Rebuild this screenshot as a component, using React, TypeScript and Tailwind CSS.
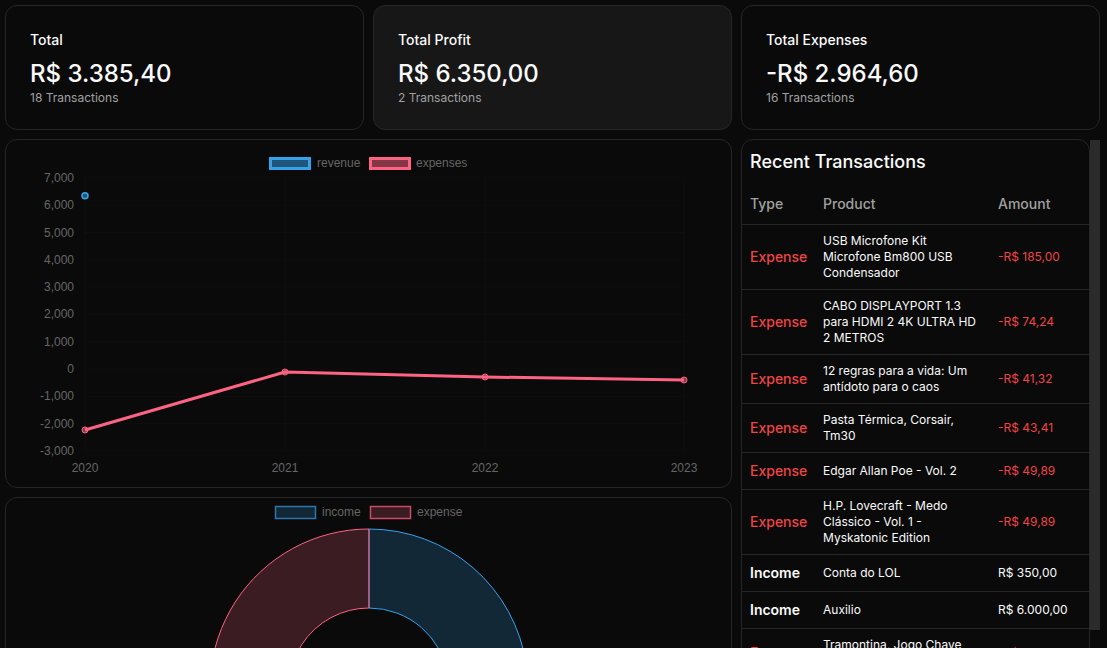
import React from 'react';

type Tx = { type: 'Expense' | 'Income'; product: string; amount: string };

const transactions: Tx[] = [
  { type: 'Expense', product: 'USB Microfone Kit Microfone Bm800 USB Condensador', amount: '-R$ 185,00' },
  { type: 'Expense', product: 'CABO DISPLAYPORT 1.3 para HDMI 2 4K ULTRA HD 2 METROS', amount: '-R$ 74,24' },
  { type: 'Expense', product: '12 regras para a vida: Um antídoto para o caos', amount: '-R$ 41,32' },
  { type: 'Expense', product: 'Pasta Térmica, Corsair, Tm30', amount: '-R$ 43,41' },
  { type: 'Expense', product: 'Edgar Allan Poe - Vol. 2', amount: '-R$ 49,89' },
  { type: 'Expense', product: 'H.P. Lovecraft - Medo Clássico - Vol. 1 - Myskatonic Edition', amount: '-R$ 49,89' },
  { type: 'Income', product: 'Conta do LOL', amount: 'R$ 350,00' },
  { type: 'Income', product: 'Auxilio', amount: 'R$ 6.000,00' },
  { type: 'Expense', product: 'Tramontina, Jogo Chave Combinada 8 Peças', amount: '-R$ 89,90' },
  { type: 'Expense', product: "Monitor Gamer LG UltraGear 24'' Full HD 144Hz", amount: '-R$ 1.149,90' },
  { type: 'Expense', product: 'Teclado Mecânico Redragon Kumara', amount: '-R$ 199,90' },
  { type: 'Expense', product: 'Mouse Logitech G203 Lightsync', amount: '-R$ 129,99' },
  { type: 'Expense', product: 'Headset HyperX Cloud Stinger', amount: '-R$ 239,90' },
  { type: 'Expense', product: 'SSD Kingston NV2 1TB NVMe', amount: '-R$ 349,90' },
  { type: 'Expense', product: 'Hub USB-C 7 em 1', amount: '-R$ 119,90' },
  { type: 'Expense', product: 'Mousepad Gamer Extra Grande', amount: '-R$ 59,90' },
  { type: 'Expense', product: 'O Senhor dos Anéis - Box', amount: '-R$ 129,90' },
  { type: 'Expense', product: 'Cabo HDMI 2.1 8K 2 metros', amount: '-R$ 51,66' },
];

const StatCard = ({ title, value, sub, active }: { title: string; value: string; sub: string; active?: boolean }) => (
  <div className={`rounded-xl border border-neutral-800 px-6 pt-6 pb-[23px] ${active ? 'bg-neutral-900' : 'bg-[#0a0a0a]'}`}>
    <div className="text-sm leading-5 font-medium text-neutral-50">{title}</div>
    <div className="mt-2 text-2xl leading-8 font-medium text-neutral-50">{value}</div>
    <div className="text-xs leading-4 text-neutral-400">{sub}</div>
  </div>
);

// chart helpers (page coordinates, svg viewBox matches the card)
const yOf = (v: number) => 369 - v * 0.0273;
const xs = [85, 285, 485, 684];
const years = ['2020', '2021', '2022', '2023'];
const expenses = [-2234, -110, -293, -403];
const ticks = [7000, 6000, 5000, 4000, 3000, 2000, 1000, 0, -1000, -2000, -3000];

const LineChart = () => {
  const pts = expenses.map((v, i) => `${xs[i]},${yOf(v)}`).join(' ');
  return (
    <svg className="block h-full w-full" viewBox="6 140 725 347" fontFamily="'Liberation Sans', Arial, sans-serif">
      {ticks.map((t) => (
        <line key={t} x1={85} x2={684} y1={yOf(t)} y2={yOf(t)} stroke="rgba(255,255,255,0.02)" />
      ))}
      {xs.map((x) => (
        <line key={x} x1={x} x2={x} y1={yOf(7000)} y2={yOf(-3000)} stroke="rgba(255,255,255,0.025)" />
      ))}
      {/* legend */}
      <rect x={270.5} y={158.5} width={39} height={10} fill="rgba(54,162,235,0.5)" stroke="#36a2eb" strokeWidth={3} />
      <text x={317} y={167} fontSize={12} fill="#666">revenue</text>
      <rect x={370.5} y={158.5} width={39} height={10} fill="rgba(255,99,132,0.5)" stroke="#ff6384" strokeWidth={3} />
      <text x={416} y={167} fontSize={12} fill="#666">expenses</text>
      {ticks.map((t) => (
        <text key={t} x={74} y={yOf(t) + 4} fontSize={12} fill="#666" textAnchor="end">
          {t.toLocaleString('en-US')}
        </text>
      ))}
      {xs.map((x, i) => (
        <text key={x} x={x} y={472} fontSize={12} fill="#666" textAnchor="middle">
          {years[i]}
        </text>
      ))}
      <polyline points={pts} fill="none" stroke="#ff6384" strokeWidth={3} strokeLinejoin="round" />
      {expenses.map((v, i) => (
        <circle key={i} cx={xs[i]} cy={yOf(v)} r={3} fill="rgba(255,99,132,0.5)" stroke="#ff6384" strokeWidth={1} />
      ))}
      <circle cx={85} cy={yOf(6350)} r={3} fill="rgba(54,162,235,0.5)" stroke="#36a2eb" strokeWidth={1.5} />
    </svg>
  );
};

const polar = (cx: number, cy: number, rad: number, deg: number) => {
  const a = ((deg - 90) * Math.PI) / 180;
  return [cx + rad * Math.cos(a), cy + rad * Math.sin(a)];
};

const ring = (cx: number, cy: number, R: number, r: number, a0: number, a1: number) => {
  const large = a1 - a0 > 180 ? 1 : 0;
  const [x0, y0] = polar(cx, cy, R, a0);
  const [x1, y1] = polar(cx, cy, R, a1);
  const [x2, y2] = polar(cx, cy, r, a1);
  const [x3, y3] = polar(cx, cy, r, a0);
  return `M${x0} ${y0} A${R} ${R} 0 ${large} 1 ${x1} ${y1} L${x2} ${y2} A${r} ${r} 0 ${large} 0 ${x3} ${y3} Z`;
};

const Doughnut = () => {
  const split = (6350 / (6350 + 2964.6)) * 360;
  return (
    <svg className="block h-full w-full" viewBox="6 498 725 347" fontFamily="'Liberation Sans', Arial, sans-serif">
      <rect x={275.5} y={506.5} width={40} height={12} fill="rgba(54,162,235,0.2)" stroke="#2f76a8" strokeWidth={1.5} />
      <text x={322} y={516} fontSize={12} fill="#666">income</text>
      <rect x={370.5} y={506.5} width={40} height={12} fill="rgba(255,99,132,0.2)" stroke="#c94a6a" strokeWidth={1.5} />
      <text x={417} y={516} fontSize={12} fill="#666">expense</text>
      <path d={ring(369, 688, 159, 80, 0, split)} fill="rgba(54,162,235,0.2)" stroke="#36a2eb" strokeWidth={1} />
      <path d={ring(369, 688, 159, 80, split, 360)} fill="rgba(255,99,132,0.2)" stroke="#ff6384" strokeWidth={1} />
    </svg>
  );
};

const TransactionsCard = () => (
  <div className="flex h-[707px]">
    <div className="min-w-0 flex-1 overflow-y-auto [scrollbar-width:none]">
      <div className="rounded-xl border border-neutral-800 bg-[#0a0a0a]">
        <h2 className="px-2 pt-2 pb-2 text-lg leading-7 font-medium text-neutral-50">Recent Transactions</h2>
        <table className="w-full table-fixed border-collapse">
          <colgroup>
            <col className="w-[73px]" />
            <col className="w-[175px]" />
            <col />
          </colgroup>
          <thead>
            <tr className="border-b border-neutral-800">
              <th className="h-10 px-2 text-left align-middle text-sm font-medium text-neutral-400">Type</th>
              <th className="h-10 px-2 text-left align-middle text-sm font-medium text-neutral-400">Product</th>
              <th className="h-10 px-2 text-left align-middle text-sm font-medium text-neutral-400">Amount</th>
            </tr>
          </thead>
          <tbody>
            {transactions.map((t, i) => {
              const exp = t.type === 'Expense';
              return (
                <tr key={i} className="border-b border-neutral-800 last:border-b-0">
                  <td className={`px-2 py-2 align-middle text-sm leading-5 ${exp ? 'font-medium text-[#ef4444]' : 'font-semibold text-neutral-50'}`}>
                    {t.type}
                  </td>
                  <td className="px-2 py-2 align-middle text-xs leading-4 text-neutral-50">{t.product}</td>
                  <td className={`px-2 py-2 align-middle text-xs leading-4 ${exp ? 'text-[#ef4444]' : 'text-neutral-50'}`}>{t.amount}</td>
                </tr>
              );
            })}
          </tbody>
        </table>
      </div>
    </div>
    {/* scrollbar */}
    <div className="w-[10px] shrink-0 pt-px">
      <div className="h-[490px] bg-[#2b2b2b]" />
    </div>
  </div>
);

export default function App() {
  return (
    <div className="h-screen overflow-hidden bg-[#0a0a0a] pt-[5px] pr-[7px] pl-[5px] font-[Inter,sans-serif] text-neutral-50">
      <div className="grid grid-cols-3 gap-[9px]">
        <StatCard title="Total" value="R$ 3.385,40" sub="18 Transactions" />
        <StatCard title="Total Profit" value="R$ 6.350,00" sub="2 Transactions" active />
        <StatCard title="Total Expenses" value="-R$ 2.964,60" sub="16 Transactions" />

        <div className="col-span-2 flex flex-col gap-[9px]">
          <div className="h-[349px] overflow-hidden rounded-xl border border-neutral-800 bg-[#0a0a0a]">
            <LineChart />
          </div>
          <div className="h-[349px] overflow-hidden rounded-xl border border-neutral-800 bg-[#0a0a0a]">
            <Doughnut />
          </div>
        </div>

        <TransactionsCard />
      </div>
    </div>
  );
}
